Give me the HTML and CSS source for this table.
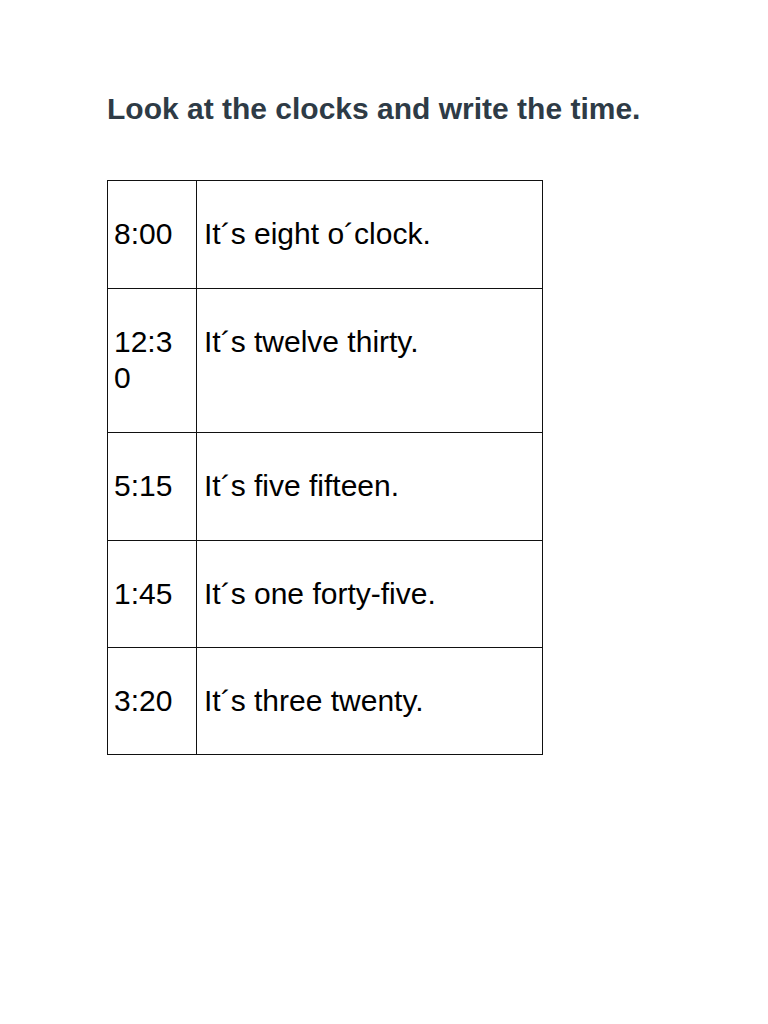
FILE: index.html
```html
<!DOCTYPE html>
<html lang="en">
<head>
<meta charset="utf-8">
<title>Look at the clocks</title>
<link rel="stylesheet" href="styles.css">
</head>
<body>
<main class="page">
  <h1 class="title">Look at the clocks and write the time.</h1>
  <table class="times">
    <tr><td class="time">8:00</td><td class="words">It´s eight o´clock.</td></tr>
    <tr><td class="time">12:30</td><td class="words">It´s twelve thirty.</td></tr>
    <tr><td class="time">5:15</td><td class="words">It´s five fifteen.</td></tr>
    <tr class="short"><td class="time">1:45</td><td class="words">It´s one forty-five.</td></tr>
    <tr class="short"><td class="time">3:20</td><td class="words">It´s three twenty.</td></tr>
  </table>
</main>
</body>
</html>
```

FILE: styles.css
```css
html, body {
  margin: 0;
  padding: 0;
  background: #ffffff;
}

.page {
  padding: 92px 0 0 107px;
  font-family: "Liberation Sans", Arial, sans-serif;
}

.title {
  margin: 0 0 54px 0;
  font-size: 30px;
  line-height: 34px;
  font-weight: bold;
  color: #2e3b46;
}

.times {
  border-collapse: collapse;
  width: 436px;
  table-layout: fixed;
  color: #000000;
  font-size: 30px;
  line-height: 36px;
}

.times td {
  border: 1px solid #111111;
  padding: 35px 8px 36px 6px;
  vertical-align: top;
}

.times .short td {
  padding-bottom: 35px;
}

.times .time {
  width: 74px;
  padding-right: 8px;
  word-break: break-all;
}

.times .words {
  padding-left: 7px;
}
```
